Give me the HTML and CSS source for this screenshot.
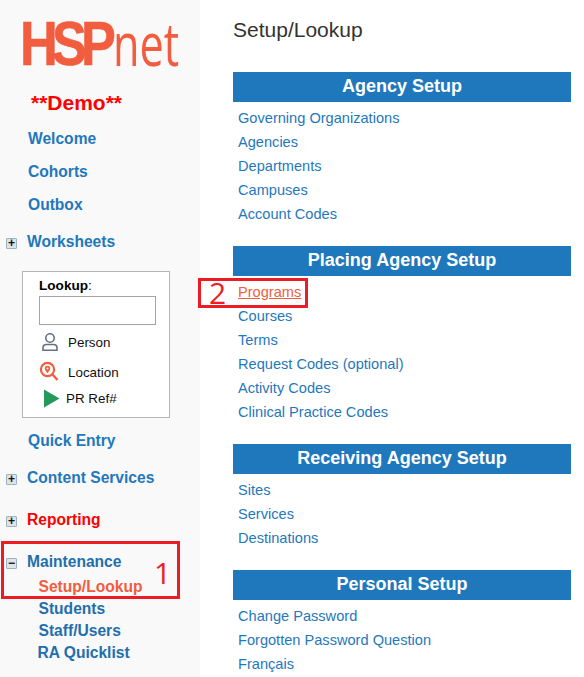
FILE: index.html
```html
<!DOCTYPE html>
<html lang="en">
<head>
    <meta charset="UTF-8">
    <meta name="viewport" content="width=device-width, initial-scale=1.0">
    <title>Setup/Lookup</title>
    <link rel="stylesheet" href="styles.css">
</head>
<body>
    <div class="page">
        <div class="sidebar">
            <div class="logo"><span class="logo-big">HSP</span><span class="logo-small">net</span></div>
            <div class="demo">**Demo**</div>

            <a class="nav-link first" href="#">Welcome</a>
            <a class="nav-link" href="#">Cohorts</a>
            <a class="nav-link" href="#">Outbox</a>

            <div class="nav-group worksheets">
                <span class="toggle">+</span>
                <a class="group-link" href="#">Worksheets</a>
            </div>

            <div class="lookup">
                <div class="lookup-label"><b>Lookup</b>:</div>
                <input type="text" class="lookup-input">
                <div class="lookup-row person">
                    <svg width="18" height="20" viewBox="0 0 18 20" fill="none" stroke="#66717f" stroke-width="1.6">
                        <circle cx="9" cy="6" r="4.2"/>
                        <path d="M2 18.2v-2.4c0-2 1.6-3.3 3.6-3.3h6.8c2 0 3.6 1.3 3.6 3.3v2.4z"/>
                    </svg>
                    <span>Person</span>
                </div>
                <div class="lookup-row location">
                    <svg width="20" height="22" viewBox="0 0 20 22" fill="none">
                        <circle cx="8.5" cy="8.5" r="6.6" stroke="#f15d3e" stroke-width="2.2"/>
                        <path d="M13.5 13.5l5 5.5" stroke="#f15d3e" stroke-width="2.4"/>
                        <path d="M8.5 4.8a2.7 2.7 0 0 1 2.7 2.7c0 1.8-2.7 4.6-2.7 4.6s-2.7-2.8-2.7-4.6a2.7 2.7 0 0 1 2.7-2.7z" fill="#f15d3e"/>
                        <circle cx="8.5" cy="7.5" r="1" fill="#fff"/>
                    </svg>
                    <span>Location</span>
                </div>
                <div class="lookup-row ref">
                    <svg width="17" height="19" viewBox="0 0 17 19">
                        <path d="M1 0.5L16.5 9.5L1 18.5z" fill="#23995c"/>
                    </svg>
                    <span>PR Ref#</span>
                </div>
            </div>

            <a class="nav-link quick" href="#">Quick Entry</a>

            <div class="nav-group content-services">
                <span class="toggle">+</span>
                <a class="group-link" href="#">Content Services</a>
            </div>
            <div class="nav-group reporting">
                <span class="toggle">+</span>
                <a class="group-link red" href="#">Reporting</a>
            </div>
            <div class="nav-group maintenance">
                <span class="toggle">&minus;</span>
                <a class="group-link dark" href="#">Maintenance</a>
            </div>
            <a class="sub-link active" href="#">Setup/Lookup</a>
            <a class="sub-link dark" href="#">Students</a>
            <a class="sub-link dark" href="#">Staff/Users</a>
            <a class="sub-link dark ra" href="#">RA Quicklist</a>
        </div>

        <div class="main">
            <h1>Setup/Lookup</h1>

            <h2>Agency Setup</h2>
            <ul>
                <li><a href="#">Governing Organizations</a></li>
                <li><a href="#">Agencies</a></li>
                <li><a href="#">Departments</a></li>
                <li><a href="#">Campuses</a></li>
                <li><a href="#">Account Codes</a></li>
            </ul>

            <h2>Placing Agency Setup</h2>
            <ul>
                <li><a class="hot" href="#">Programs</a></li>
                <li><a href="#">Courses</a></li>
                <li><a href="#">Terms</a></li>
                <li><a href="#">Request Codes (optional)</a></li>
                <li><a href="#">Activity Codes</a></li>
                <li><a href="#">Clinical Practice Codes</a></li>
            </ul>

            <h2>Receiving Agency Setup</h2>
            <ul>
                <li><a href="#">Sites</a></li>
                <li><a href="#">Services</a></li>
                <li><a href="#">Destinations</a></li>
            </ul>

            <h2>Personal Setup</h2>
            <ul>
                <li><a href="#">Change Password</a></li>
                <li><a href="#">Forgotten Password Question</a></li>
                <li><a href="#">Français</a></li>
            </ul>
        </div>
    </div>

    <!-- red callouts drawn on top of the screenshot -->
    <div class="callout callout-one"><span>1</span></div>
    <div class="callout callout-two"><span>2</span></div>
</body>
</html>
```

FILE: styles.css
```css
html, body {
    margin: 0;
    padding: 0;
    height: 677px;
    overflow: hidden;
    background-color: #fff;
    font-family: "Liberation Sans", Arial, sans-serif;
}
a {
    text-decoration: none;
}
.page {
    display: flex;
    height: 677px;
}

/* left column */
.sidebar {
    width: 200px;
    height: 677px;
    flex: none;
    box-sizing: border-box;
    background-color: #f9f9f9;
    display: flex;
    flex-direction: column;
    align-items: flex-start;
}
.logo {
    display: flex;
    margin: 10px 0 0 20px;
    height: 66px;
    line-height: 66px;
    color: #f15d3e;
    white-space: nowrap;
    font-family: "Open Sans", sans-serif;
}
.logo-big {
    display: block;
    width: 93px;
    font-family: "Liberation Sans", sans-serif;
    font-weight: bold;
    font-size: 63px;
    letter-spacing: -7px;
    -webkit-text-stroke: 0.6px #f15d3e;
    transform: scaleX(0.83);
    transform-origin: left;
}
.logo-small {
    display: block;
    font-size: 60px;
    transform: scaleX(0.72);
    transform-origin: left;
}
.demo {
    margin: 15px 0 0 31px;
    height: 24px;
    line-height: 24px;
    font-size: 21px;
    font-weight: bold;
    color: #fe0000;
}
.nav-link {
    display: block;
    margin-left: 28px;
    height: 33px;
    line-height: 33px;
    font-size: 15.6px;
    font-weight: bold;
    color: #1f78bc;
}
.nav-link.first {
    margin-top: 7px;
}
.nav-link.quick {
    margin-top: 6px;
}
.nav-group {
    display: flex;
    align-items: center;
    height: 24px;
    line-height: 24px;
}
.worksheets {
    margin-top: 9px;
}
.content-services {
    margin-top: 9px;
}
.reporting {
    margin-top: 18px;
}
.maintenance {
    margin-top: 18px;
}
.toggle {
    width: 9px;
    height: 9px;
    margin: 2px 10px 0 6px;
    border: 1px solid #9db2c4;
    border-radius: 1px;
    background-color: #dfe3e8;
    color: #111;
    font-size: 12px;
    font-weight: bold;
    line-height: 9px;
    text-align: center;
}
.group-link {
    font-size: 15.6px;
    font-weight: bold;
    color: #1f78bc;
}
.group-link.red {
    color: #fe0000;
}
.group-link.dark {
    color: #1f6fae;
}
.sub-link {
    display: block;
    margin-left: 38.5px;
    height: 22px;
    line-height: 22px;
    font-size: 15.6px;
    font-weight: bold;
}
.sub-link.active {
    margin-top: 2px;
    color: #f15d3e;
}
.sub-link.dark {
    color: #1f6fae;
}
.sub-link.ra {
    margin-left: 37.5px;
}

/* lookup box */
.lookup {
    width: 148px;
    height: 147px;
    margin: 17px 0 0 22px;
    box-sizing: border-box;
    border: 1px solid #b5b5b5;
    background-color: #fff;
    padding: 4px 0 0 16px;
}
.lookup-label {
    height: 20px;
    line-height: 20px;
    font-size: 13.6px;
    color: #000;
}
.lookup-input {
    display: block;
    width: 117px;
    height: 29px;
    margin: 0;
    padding: 0;
    box-sizing: border-box;
    border: 1px solid #a5a5a5;
    background-color: #fff;
}
.lookup-row {
    display: flex;
    align-items: center;
    font-size: 13.4px;
    color: #111;
}
.lookup-row.person {
    height: 30px;
    margin-top: 2px;
    gap: 9px;
    padding-left: 2px;
}
.lookup-row.location {
    height: 30px;
    gap: 9px;
}
.lookup-row.ref {
    height: 24px;
    margin-top: -1px;
    gap: 6px;
    padding-left: 4px;
}

/* right column */
.main {
    width: 338px;
    margin-left: 33px;
    flex: none;
}
h1 {
    margin: 19px 0 0;
    height: 22px;
    line-height: 22px;
    font-size: 21px;
    font-weight: normal;
    color: #333;
}
h2 {
    margin: 0;
    height: 30px;
    line-height: 28px;
    background-color: #1f78bc;
    color: #fff;
    font-size: 18px;
    font-weight: bold;
    text-align: center;
}
h1 + h2 {
    margin-top: 31px;
}
ul {
    list-style: none;
    margin: 4px 0 20px;
    padding: 0 0 0 5px;
}
li {
    height: 24px;
    line-height: 24px;
    font-size: 14.6px;
}
li a {
    color: #1f78bc;
}
li a.hot {
    color: #f15d3e;
    text-decoration: underline;
}

/* callouts */
.callout {
    position: absolute;
    box-sizing: border-box;
    border: 3px solid #ed1c24;
    color: #ed1c24;
    font-size: 30px;
    font-family: "Open Sans", sans-serif;
    line-height: 32px;
}
.callout span {
    position: absolute;
}
.callout-one {
    left: 1px;
    top: 541px;
    width: 179px;
    height: 58px;
}
.callout-one span {
    left: 150px;
    top: 13px;
}
.callout-two {
    left: 198px;
    top: 278px;
    width: 110px;
    height: 30px;
}
.callout-two span {
    left: 8px;
    top: -4px;
}
```
